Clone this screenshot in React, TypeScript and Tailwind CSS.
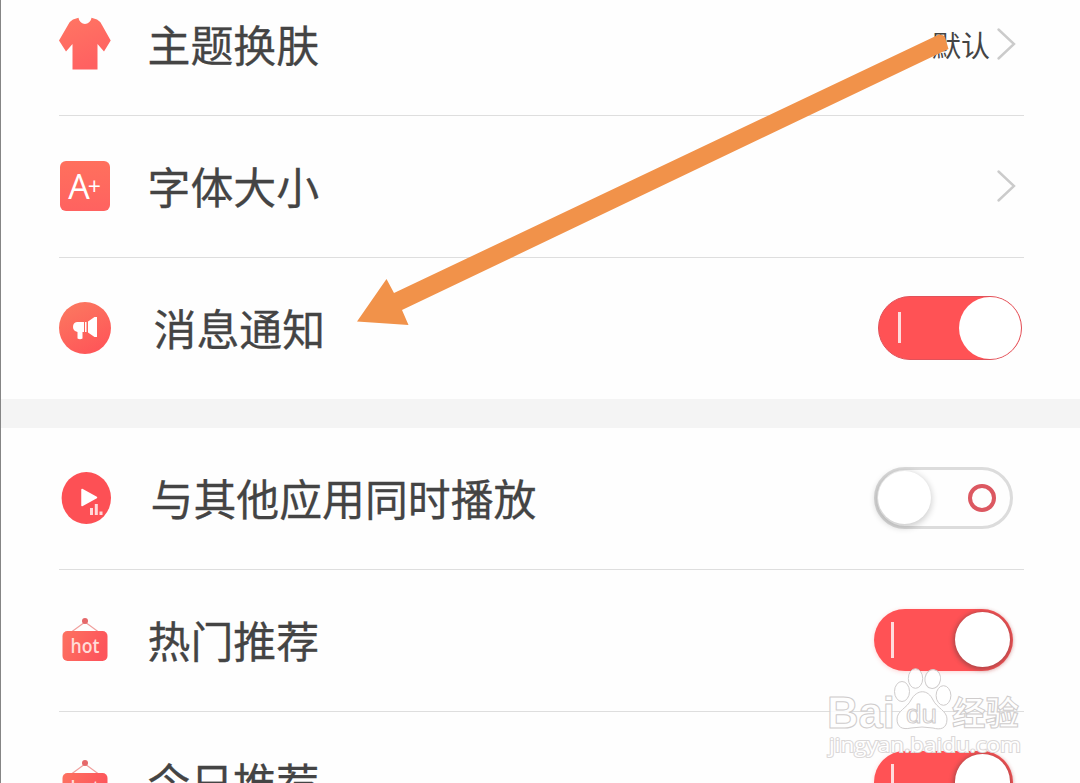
import React from 'react';

const SETTINGS = [
  { icon: <ShirtIcon />, label: '主题换肤', offset: 'pl-[37px]', control: <Arrow value="默认" />, border: true },
  { icon: <FontIcon />, label: '字体大小', offset: 'pl-[37px]', control: <Arrow />, border: true },
  { icon: <SpeakerIcon />, label: '消息通知', offset: 'pl-[43px]', control: <WideSwitch />, border: false },
];

const PLAY_SETTINGS = [
  { icon: <PlayIcon />, label: '与其他应用同时播放', offset: 'pl-[40px]', control: <SwitchOff />, border: true },
  { icon: <HotIcon />, label: '热门推荐', offset: 'pl-[37px]', control: <SwitchOn />, border: true },
  { icon: <HotIcon />, label: '今日推荐', offset: 'pl-[37px]', control: <SwitchOn />, border: true },
];

const App: React.FC = () => {
  return (
    <div className="relative h-[783px] w-[1080px] overflow-hidden bg-[#fefefe] font-['Noto_Sans_CJK_SC',sans-serif] text-[#444444]">
      <div className="flex h-full flex-col border-l border-[#858585]">
        <section className="-mt-[26px] shrink-0 pl-[57.5px] pr-14">
          {SETTINGS.map((s) => (
            <Row key={s.label} {...s} />
          ))}
        </section>
        <div className="h-[29px] shrink-0 bg-[#f4f4f4]" />
        <section className="shrink-0 pl-[57.5px] pr-14">
          {PLAY_SETTINGS.map((s) => (
            <Row key={s.label} {...s} />
          ))}
        </section>
      </div>

      <PointerArrow />
      <Watermark />
    </div>
  );
};

const Row: React.FC<{ icon: React.ReactNode; label: string; offset: string; control: React.ReactNode; border: boolean }> = ({ icon, label, offset, control, border }) => (
  <div className={`flex items-center pb-0.5 ${border ? 'h-[142px] border-b border-[#dedede]' : 'h-[141px]'}`}>
    {icon}
    <span className={`flex-1 whitespace-nowrap pb-0.5 text-[42.9px] leading-[60px] [-webkit-text-stroke:0.3px_#444444] ${offset}`}>{label}</span>
    {control}
  </div>
);

function Arrow({ value }: { value?: string }) {
  return (
    <div className="flex items-center gap-1.5 pr-[7px]">
      {value && <span className="text-[29px] leading-10">{value}</span>}
      <svg width="21" height="34" viewBox="0 0 21 34" fill="none" stroke="#cbcbcb" strokeWidth="2.4" strokeLinecap="round">
        <path d="M2.5 2.5L18 17L2.5 31.5" />
      </svg>
    </div>
  );
}

function WideSwitch() {
  return (
    <div className="mr-0.5 flex h-16 w-[144px] items-center justify-between rounded-full border border-[#e0525a] bg-[#ff5255] pl-[19px]">
      <span className="h-[31px] w-[3px] bg-[#ffdcdc]" />
      <span className="size-[62px] rounded-full bg-white" />
    </div>
  );
}

function SwitchOn() {
  return (
    <div className="mr-[11px] flex h-[62px] w-[139px] items-center justify-between rounded-full bg-[#ff5255] pl-[17px] pr-[3px] shadow-[0_1px_4px_rgba(255,82,85,0.25)]">
      <span className="h-9 w-[3px] bg-[#ffdcdc]" />
      <span className="size-[55px] rounded-full bg-white shadow-[0_1px_4px_2px_rgba(90,60,60,0.45)]" />
    </div>
  );
}

function SwitchOff() {
  return (
    <div className="mr-[11px] flex h-[62px] w-[139px] items-center justify-between rounded-full border-[3px] border-[#dcdcdc] bg-[#fefefe] pl-px pr-3.5">
      <span className="size-[53px] rounded-full bg-white shadow-[-1px_2px_6px_2px_rgba(0,0,0,0.18)]" />
      <span className="size-7 rounded-full border-[4.5px] border-[#dc5861]" />
    </div>
  );
}

function ShirtIcon() {
  return (
    <svg width="52" height="54" viewBox="0 0 52 54">
      <defs>
        <linearGradient id="shirt" x1="0" y1="0" x2="0.4" y2="1">
          <stop offset="0" stopColor="#ff7663" />
          <stop offset="1" stopColor="#ff6161" />
        </linearGradient>
      </defs>
      <path d="M14 2.5L19.5 0.8C21 9 31 9 32.5 0.8L38 2.5Q41 4 43 8L51.7 23.5L45 34.5L38.5 27V52.5H13.5V27L7 34.5L0 23.5L9 8Q11 4 14 2.5Z" fill="url(#shirt)" />
    </svg>
  );
}

function FontIcon() {
  return (
    <div className="flex w-[52px] justify-center">
      <div className="flex size-[50px] items-center justify-center rounded-[6px] bg-linear-to-b from-[#ff705d] to-[#ff6260] font-['Open_Sans',sans-serif] text-white">
        <span className="text-[34px] leading-none">A</span>
        <span className="-ml-0.5 pt-0.5 text-[23px] leading-none">+</span>
      </div>
    </div>
  );
}

function SpeakerIcon() {
  return (
    <svg width="52" height="52" viewBox="0 0 52 52">
      <defs>
        <linearGradient id="speaker" x1="0.2" y1="0" x2="0.7" y2="1">
          <stop offset="0" stopColor="#fb7860" />
          <stop offset="1" stopColor="#ff5558" />
        </linearGradient>
      </defs>
      <circle cx="26" cy="26" r="26" fill="url(#speaker)" />
      <g fill="#fff">
        <path d="M18 20H25V30H23.5V36.5Q21 38 18.5 36.5V30Q14 29 14 25Q14 20.5 18 20Z" />
        <path d="M26 20H27.5V30H26Z" />
        <path d="M29 19.5L35.5 15H38V35H35.5L29 30.5Z" />
      </g>
    </svg>
  );
}

function PlayIcon() {
  return (
    <svg width="52" height="52" viewBox="0 0 52 52">
      <ellipse cx="27.3" cy="26" rx="24.7" ry="26" fill="#fd5055" />
      <path d="M23 17.5V33.5L37.5 25.5Z" fill="#fff" stroke="#fff" strokeWidth="1.5" strokeLinejoin="round" />
      <path d="M31 36H34V43H31ZM35.8 32H38.8V43H35.8ZM40.5 39.5H43.5V43H40.5Z" fill="#ffdada" />
    </svg>
  );
}

function HotIcon() {
  return (
    <svg width="52" height="46" viewBox="0 0 52 46">
      <defs>
        <linearGradient id="hot" x1="0" y1="0" x2="1" y2="0.3">
          <stop offset="0" stopColor="#fd7261" />
          <stop offset="1" stopColor="#fd555b" />
        </linearGradient>
      </defs>
      <path d="M11 16L26 5L41 16" fill="none" stroke="#f0a09e" strokeWidth="1.2" />
      <circle cx="26" cy="4" r="3" fill="#e5686a" />
      <rect x="3.5" y="14" width="45" height="30" rx="5" fill="url(#hot)" />
      <text x="26" y="36" textAnchor="middle" textLength="29" lengthAdjust="spacingAndGlyphs" fontFamily="Open Sans, sans-serif" fontSize="19" fontWeight="600" fill="#ffdcd8">hot</text>
    </svg>
  );
}

// Annotation drawn over the list
function PointerArrow() {
  return (
    <svg className="absolute left-0 top-0" width="1080" height="400" viewBox="0 0 1080 400">
      <path d="M357 321.500L386.500 279L394 293L939 34.500Q943 34 945 37L948.500 49L402 310L408.500 325Z" fill="#f1924a" />
    </svg>
  );
}

function Watermark() {
  return (
    <svg className="absolute left-[820px] top-[660px]" width="220" height="110" viewBox="0 0 220 110" fill="#ffffff" stroke="#cfcccc" strokeWidth="1" fillOpacity="0.9">
      <g fontFamily="Liberation Sans, sans-serif" fontWeight="700" strokeLinejoin="round">
        <text x="7" y="68" fontSize="44" textLength="68" lengthAdjust="spacingAndGlyphs">Bai</text>
        <path d="M91 40C97 29 108 29 113 40C117 48 127 51 127 59C127 69 120 70 113 68Q102 66 91 68C82 70 77 67 77 59C77 51 87 48 91 40Z" />
        <ellipse cx="82" cy="31.500" rx="7.500" ry="10" />
        <ellipse cx="95.500" cy="18.500" rx="7.200" ry="9.800" />
        <ellipse cx="112.700" cy="19" rx="7.800" ry="9.500" transform="rotate(10 112.7 19)" />
        <ellipse cx="123.500" cy="35.500" rx="7.400" ry="9.800" />
        <text x="86" y="63" fontSize="26" fontWeight="400" textLength="31" lengthAdjust="spacingAndGlyphs">du</text>
      </g>
      <text x="132" y="65" fontFamily="Noto Sans CJK SC, sans-serif" fontSize="33" fontWeight="700" textLength="67" lengthAdjust="spacingAndGlyphs">经验</text>
      <text x="9" y="92" fontFamily="Open Sans, sans-serif" fontSize="20" textLength="192" lengthAdjust="spacingAndGlyphs" stroke="#dbd8d8" strokeWidth="2" paintOrder="stroke" fillOpacity="1">jingyan.baidu.com</text>
    </svg>
  );
}

export default App;
